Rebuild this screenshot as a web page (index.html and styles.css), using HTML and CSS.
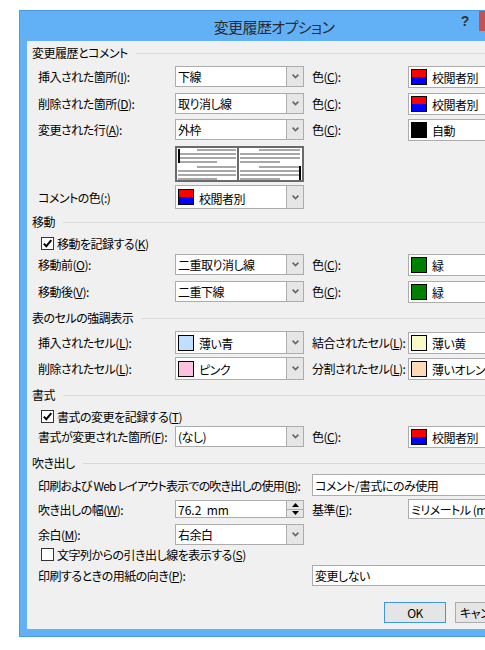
FILE: index.html
```html
<!DOCTYPE html>
<html lang="ja">
<head>
<meta charset="utf-8">
<title>変更履歴オプション</title>
<link rel="stylesheet" href="styles.css">
</head>
<body>
<div class="window">
  <div class="titlebar">
    <div class="title">変更履歴オプション</div>
    <div class="help">?</div>
    <div class="close">✕</div>
  </div>
  <div class="client">
    <div class="group g1"><span>変更履歴とコメント</span></div>

    <div class="row r1">
      <span class="lab">挿入された箇所(<u>I</u>):</span>
      <div class="combo"><span class="val">下線</span><span class="btn"><svg width="7" height="5" viewBox="0 0 7 5"><path d="M0.6 0.6 L3.5 3.6 L6.4 0.6" fill="none" stroke="#666" stroke-width="1.6"/></svg></span></div>
      <span class="clab">色(<u>C</u>):</span>
      <div class="cbox"><span class="sw sw-rev"></span><span>校閲者別</span></div>
    </div>

    <div class="row r2">
      <span class="lab">削除された箇所(<u>D</u>):</span>
      <div class="combo"><span class="val">取り消し線</span><span class="btn"><svg width="7" height="5" viewBox="0 0 7 5"><path d="M0.6 0.6 L3.5 3.6 L6.4 0.6" fill="none" stroke="#666" stroke-width="1.6"/></svg></span></div>
      <span class="clab">色(<u>C</u>):</span>
      <div class="cbox"><span class="sw sw-rev"></span><span>校閲者別</span></div>
    </div>

    <div class="row r3">
      <span class="lab">変更された行(<u>A</u>):</span>
      <div class="combo"><span class="val">外枠</span><span class="btn"><svg width="7" height="5" viewBox="0 0 7 5"><path d="M0.6 0.6 L3.5 3.6 L6.4 0.6" fill="none" stroke="#666" stroke-width="1.6"/></svg></span></div>
      <span class="clab">色(<u>C</u>):</span>
      <div class="cbox"><span class="sw sw-black"></span><span>自動</span></div>
    </div>

    <div class="preview-row">
      <svg class="preview" width="129" height="36" viewBox="0 0 129 36">
        <rect x="1" y="1" width="127" height="34" fill="#fff" stroke="#6a6a6a" stroke-width="2"/>
        <rect x="62" y="1" width="2" height="34" fill="#6a6a6a"/>
        <g fill="#a8a8a8">
          <rect x="22" y="3" width="39" height="2"/>
          <rect x="3" y="7" width="58" height="2"/>
          <rect x="3" y="11" width="58" height="2"/>
          <rect x="3" y="15" width="39" height="2"/>
          <rect x="22" y="20" width="39" height="2"/>
          <rect x="3" y="24" width="58" height="2"/>
          <rect x="3" y="28" width="58" height="2"/>
          <rect x="3" y="32" width="39" height="2"/>
          <rect x="84" y="3" width="41" height="2"/>
          <rect x="65" y="7" width="60" height="2"/>
          <rect x="65" y="11" width="60" height="2"/>
          <rect x="65" y="15" width="40" height="2"/>
          <rect x="84" y="20" width="41" height="2"/>
          <rect x="65" y="24" width="60" height="2"/>
          <rect x="65" y="28" width="60" height="2"/>
          <rect x="65" y="32" width="40" height="2"/>
        </g>
        <rect x="3" y="3" width="2" height="14" fill="#000"/>
        <rect x="124" y="20" width="2" height="14" fill="#000"/>
      </svg>
    </div>

    <div class="row h24 rcomment">
      <span class="lab">コメントの色(:)</span>
      <div class="combo owner"><span class="sw sw-rev"></span><span class="val">校閲者別</span><span class="btn"><svg width="7" height="5" viewBox="0 0 7 5"><path d="M0.6 0.6 L3.5 3.6 L6.4 0.6" fill="none" stroke="#666" stroke-width="1.6"/></svg></span></div>
    </div>

    <div class="group g2"><span>移動</span></div>

    <div class="check-row c1">
      <span class="chk"><svg width="11" height="11" viewBox="0 0 11 11"><path d="M1.8 5.6 L4.3 8.2 L9.3 2.2" fill="none" stroke="#000" stroke-width="2"/></svg></span>
      <span>移動を記録する(<u>K</u>)</span>
    </div>

    <div class="row rmove1">
      <span class="lab">移動前(<u>O</u>):</span>
      <div class="combo"><span class="val">二重取り消し線</span><span class="btn"><svg width="7" height="5" viewBox="0 0 7 5"><path d="M0.6 0.6 L3.5 3.6 L6.4 0.6" fill="none" stroke="#666" stroke-width="1.6"/></svg></span></div>
      <span class="clab">色(<u>C</u>):</span>
      <div class="cbox"><span class="sw sw-green"></span><span>緑</span></div>
    </div>

    <div class="row rmove2">
      <span class="lab">移動後(<u>V</u>):</span>
      <div class="combo"><span class="val">二重下線</span><span class="btn"><svg width="7" height="5" viewBox="0 0 7 5"><path d="M0.6 0.6 L3.5 3.6 L6.4 0.6" fill="none" stroke="#666" stroke-width="1.6"/></svg></span></div>
      <span class="clab">色(<u>C</u>):</span>
      <div class="cbox"><span class="sw sw-green"></span><span>緑</span></div>
    </div>

    <div class="group g3"><span>表のセルの強調表示</span></div>

    <div class="row h23 rcell1">
      <span class="lab">挿入されたセル(<u>L</u>):</span>
      <div class="combo owner"><span class="sw sw-lblue"></span><span class="val">薄い青</span><span class="btn"><svg width="7" height="5" viewBox="0 0 7 5"><path d="M0.6 0.6 L3.5 3.6 L6.4 0.6" fill="none" stroke="#666" stroke-width="1.6"/></svg></span></div>
      <span class="clab">結合されたセル(<u>L</u>):</span>
      <div class="cbox"><span class="sw sw-lyellow"></span><span>薄い黄</span></div>
    </div>

    <div class="row h23 rcell2">
      <span class="lab">削除されたセル(<u>L</u>):</span>
      <div class="combo owner"><span class="sw sw-pink"></span><span class="val">ピンク</span><span class="btn"><svg width="7" height="5" viewBox="0 0 7 5"><path d="M0.6 0.6 L3.5 3.6 L6.4 0.6" fill="none" stroke="#666" stroke-width="1.6"/></svg></span></div>
      <span class="clab">分割されたセル(<u>L</u>):</span>
      <div class="cbox"><span class="sw sw-lorange"></span><span>薄いオレンジ</span></div>
    </div>

    <div class="group g4"><span>書式</span></div>

    <div class="check-row c2">
      <span class="chk"><svg width="11" height="11" viewBox="0 0 11 11"><path d="M1.8 5.6 L4.3 8.2 L9.3 2.2" fill="none" stroke="#000" stroke-width="2"/></svg></span>
      <span>書式の変更を記録する(<u>T</u>)</span>
    </div>

    <div class="row rfmt">
      <span class="lab">書式が変更された箇所(<u>F</u>):</span>
      <div class="combo"><span class="val">(なし)</span><span class="btn"><svg width="7" height="5" viewBox="0 0 7 5"><path d="M0.6 0.6 L3.5 3.6 L6.4 0.6" fill="none" stroke="#666" stroke-width="1.6"/></svg></span></div>
      <span class="clab">色(<u>C</u>):</span>
      <div class="cbox"><span class="sw sw-rev"></span><span>校閲者別</span></div>
    </div>

    <div class="group g5"><span>吹き出し</span></div>

    <div class="row h22 rweb">
      <span class="lab lab-wide tight">印刷および Web レイアウト表示での吹き出しの使用(<u>B</u>):</span>
      <div class="tbox wide">コメント/書式にのみ使用</div>
    </div>

    <div class="row h20 rwidth">
      <span class="lab">吹き出しの幅(<u>W</u>):</span>
      <div class="spin"><span class="val">76.2&nbsp;&nbsp;mm</span>
        <span class="spinbtn">
          <span class="up"><svg width="7" height="4" viewBox="0 0 7 4"><path d="M0 4 L3.5 0 L7 4 Z" fill="#000"/></svg></span>
          <span class="dn"><svg width="7" height="4" viewBox="0 0 7 4"><path d="M0 0 L3.5 4 L7 0 Z" fill="#000"/></svg></span>
        </span>
      </div>
      <span class="clab">基準(<u>E</u>):</span>
      <div class="tbox unit">ミリメートル (mm)</div>
    </div>

    <div class="row rmargin">
      <span class="lab">余白(<u>M</u>):</span>
      <div class="combo"><span class="val">右余白</span><span class="btn"><svg width="7" height="5" viewBox="0 0 7 5"><path d="M0.6 0.6 L3.5 3.6 L6.4 0.6" fill="none" stroke="#666" stroke-width="1.6"/></svg></span></div>
    </div>

    <div class="check-row c3">
      <span class="chk"></span>
      <span>文字列からの引き出し線を表示する(<u>S</u>)</span>
    </div>

    <div class="row rpaper">
      <span class="lab lab-wide">印刷するときの用紙の向き(<u>P</u>):</span>
      <div class="tbox wide">変更しない</div>
    </div>

    <div class="buttons">
      <button class="btn-ok">OK</button>
      <button class="btn-cancel">キャンセル</button>
    </div>
  </div>
</div>
</body>
</html>
```
FILE: styles.css
```css
html, body {
  margin: 0;
  padding: 0;
  overflow: hidden;
  background: #ffffff;
}
body {
  width: 485px;
  height: 650px;
  font-family: "Noto Sans CJK JP", "Noto Sans", sans-serif;
  font-size: 12px;
  letter-spacing: -0.5px;
  color: #000;
  font-feature-settings: "palt";
}
u { text-decoration-thickness: 1px; text-underline-offset: 1px; }

.window {
  margin: 10px 0 0 19px;
  width: 510px;
  box-sizing: border-box;
  border: 1px solid #4b9be4;
  background: #62b1f7;
  padding: 0 7px 7px;
}
.titlebar {
  display: grid;
  height: 30px;
  margin: 0 -7px;
}
.titlebar > * { grid-area: 1 / 1; }
.title {
  justify-self: center;
  align-self: center;
  font-size: 15px;
  letter-spacing: -0.6px;
  line-height: 20px;
  color: #2a2a2a;
  margin-top: 1px;
}
.help {
  justify-self: end;
  align-self: start;
  margin-right: 49px;
  width: 28px;
  height: 20px;
  text-align: center;
  font: bold 14px/20px "Liberation Sans", sans-serif;
  letter-spacing: 0;
  color: #333;
}
.close {
  justify-self: end;
  align-self: start;
  margin-right: 4px;
  width: 45px;
  height: 20px;
  background: #c75050;
  color: #fff;
  text-align: center;
  font: bold 12px/20px "DejaVu Sans", sans-serif;
}
.client {
  background: #f0f0f0;
  height: 588px;
  overflow: hidden;
}

.group {
  display: flex;
  align-items: center;
  height: 16px;
  line-height: 16px;
  padding-left: 5px;
  white-space: nowrap;
}
.group::after {
  content: "";
  flex: 1;
  border-top: 1px solid #d9d9d9;
  margin-left: 8px;
}
.g1 { margin-top: 4px; }
.g2 { margin-top: 5px; }
.g3 { margin-top: 8px; }
.g4 { margin-top: 7px; }
.g5 { margin-top: 8px; }

.row {
  display: flex;
  align-items: center;
  height: 21px;
  padding-left: 11px;
  white-space: nowrap;
}
.row.h20 { height: 20px; }
.row.h22 { height: 22px; }
.row.h23 { height: 23px; }
.row.h24 { height: 24px; }

.r1 { margin-top: 5px; }
.r2 { margin-top: 6px; }
.r3 { margin-top: 5px; }
.rcomment { margin-top: 3px; }
.rmove1 { margin-top: 3px; }
.rmove2 { margin-top: 6px; }
.rcell1 { margin-top: 5px; }
.rcell2 { margin-top: 3px; }
.rfmt { margin-top: 2px; }
.rweb { margin-top: 3px; }
.rwidth { margin-top: 3px; }
.rmargin { margin-top: 5px; }
.rpaper { margin-top: 3px; }

.lab { width: 137px; flex: none; overflow: hidden; }
.lab-wide { width: 274px; }
.tight { letter-spacing: -0.8px; }
.clab { margin-left: 8px; width: 96px; flex: none; overflow: hidden; }

.combo {
  width: 129px;
  height: 100%;
  box-sizing: border-box;
  border: 1px solid #acacac;
  background: #fff;
  display: flex;
  align-items: center;
  flex: none;
}
.combo .val { flex: 1; padding-left: 2px; }
.combo.owner { padding-left: 2px; }
.combo.owner .val { padding-left: 0; padding-top: 2px; }
.combo .btn {
  width: 16px;
  align-self: stretch;
  border-left: 1px solid #acacac;
  background: #e6e6e6;
  display: flex;
  align-items: center;
  justify-content: center;
}

.cbox {
  width: 110px;
  height: 22px;
  box-sizing: border-box;
  border: 1px solid #acacac;
  background: #fff;
  display: flex;
  align-items: center;
  padding: 2px 0 0 2px;
  flex: none;
}
.cbox .sw { margin-top: -2px; }
.sw {
  width: 14px;
  height: 14px;
  border: 1px solid #000;
  margin-right: 5px;
  flex: none;
}
.sw-rev { background: linear-gradient(#ff0000 50%, #0000ff 50%); }
.sw-black { background: #000; }
.sw-green { background: #008000; }
.sw-lblue { background: #c0dfff; }
.sw-pink { background: #ffc0e0; }
.sw-lyellow { background: #fafac8; }
.sw-lorange { background: #ffdab6; }

.preview-row {
  margin-top: 6px;
  padding-left: 148px;
  height: 36px;
}
.preview { display: block; }

.check-row {
  display: flex;
  align-items: center;
  height: 16px;
  padding-left: 14px;
  white-space: nowrap;
}
.c1 { margin-top: 5px; }
.c2 { margin-top: 5px; }
.c3 { margin-top: 1px; }
.chk {
  width: 13px;
  height: 13px;
  box-sizing: border-box;
  border: 1px solid #333;
  background: #fff;
  margin-right: 3px;
  display: flex;
  align-items: center;
  justify-content: center;
  flex: none;
}

.tbox {
  height: 100%;
  box-sizing: border-box;
  border: 1px solid #acacac;
  background: #fff;
  display: flex;
  align-items: center;
  padding-left: 2px;
  flex: none;
  white-space: nowrap;
}
.tbox.wide { width: 200px; }
.tbox.unit { width: 110px; }

.spin {
  width: 129px;
  height: 18px;
  box-sizing: border-box;
  border: 1px solid #acacac;
  background: #fff;
  display: flex;
  align-items: center;
  flex: none;
}
.spin .val { flex: 1; padding-left: 2px; letter-spacing: 0; }
.spinbtn {
  width: 16px;
  align-self: stretch;
  border-left: 1px solid #acacac;
  background: #e6e6e6;
  display: flex;
  flex-direction: column;
}
.spinbtn .up, .spinbtn .dn {
  flex: 1;
  display: flex;
  align-items: center;
  justify-content: center;
}
.spinbtn .up { border-bottom: 1px solid #acacac; }

.buttons {
  display: flex;
  gap: 9px;
  margin-top: 16px;
  padding-left: 357px;
}
.buttons button {
  height: 21px;
  width: 62px;
  flex: none;
  font-family: "Noto Sans CJK JP", "Noto Sans", sans-serif;
  font-size: 12px;
  letter-spacing: -0.5px;
  font-feature-settings: "palt";
  background: #e5e5e5;
  border: 1px solid #acacac;
  padding: 0;
  color: #000;
}
.buttons .btn-ok { border-color: #3c98e6; }
.buttons .btn-cancel { width: 75px; text-align: left; padding-left: 4px; white-space: nowrap; }
```
